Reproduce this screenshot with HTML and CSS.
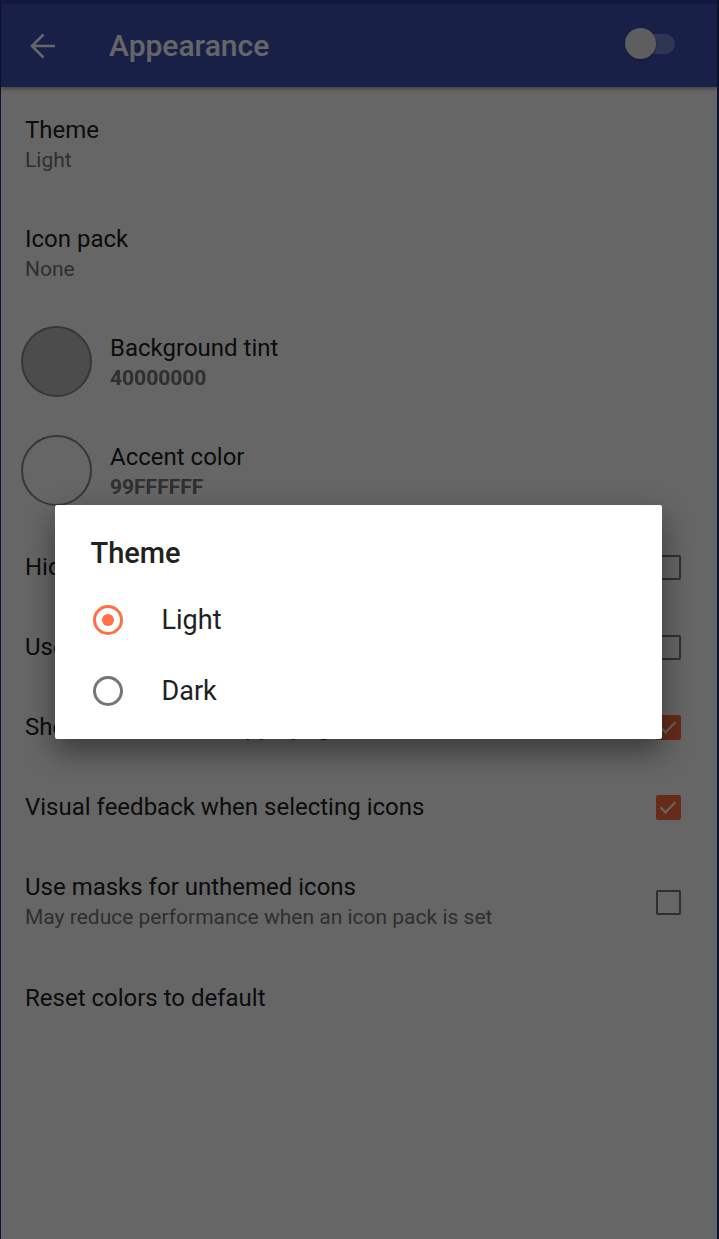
FILE: index.html
```html
<!DOCTYPE html>
<html>
<head>
<meta charset="utf-8">
<link rel="stylesheet" href="styles.css">
</head>
<body>
<div class="screen">
  <div class="statusbar"></div>
  <header class="toolbar">
    <svg class="back" width="28" height="28" viewBox="0 0 28 28"><path d="M26 14H3M14.5 2.5L3 14l11.5 11.5" fill="none" stroke="#fff" stroke-width="2.6"/></svg>
    <h1 class="title">Appearance</h1>
    <div class="switch"><span class="track"></span><span class="thumb"></span></div>
  </header>
  <main class="list">
    <div class="row two"><div class="text"><div class="t">Theme</div><div class="s">Light</div></div></div>
    <div class="row two"><div class="text"><div class="t">Icon pack</div><div class="s">None</div></div></div>
    <div class="row two color"><span class="swatch dark"></span><div class="text"><div class="t">Background tint</div><div class="s bold">40000000</div></div></div>
    <div class="row two color"><span class="swatch light"></span><div class="text"><div class="t">Accent color</div><div class="s bold">99FFFFFF</div></div></div>
    <div class="row one"><div class="text"><div class="t">Hide the status bar</div></div><span class="cb"></span></div>
    <div class="row one"><div class="text"><div class="t">Use rounded icons</div></div><span class="cb"></span></div>
    <div class="row one"><div class="text"><div class="t">Show labels on the apps page</div></div><span class="cb on"></span></div>
    <div class="row one"><div class="text"><div class="t">Visual feedback when selecting icons</div></div><span class="cb on"></span></div>
    <div class="row two masks"><div class="text"><div class="t">Use masks for unthemed icons</div><div class="s">May reduce performance when an icon pack is set</div></div><span class="cb"></span></div>
    <div class="row one"><div class="text"><div class="t">Reset colors to default</div></div></div>
  </main>
  <div class="scrim">
    <div class="dialog">
      <div class="dtitle">Theme</div>
      <div class="opt"><span class="radio on"></span><span>Light</span></div>
      <div class="opt"><span class="radio"></span><span>Dark</span></div>
    </div>
  </div>
</div>
</body>
</html>
```
FILE: styles.css
```css
html, body { margin: 0; padding: 0; }
body {
  background: #0e1230;
  font-family: Roboto, "Noto Sans", sans-serif;
  width: 719px;
  height: 1239px;
  overflow: hidden;
}
.screen {
  position: relative;
  margin: 0 2px 0 1px;
  height: 1239px;
  background: #fff;
  display: flex;
  flex-direction: column;
}
.statusbar { height: 4px; background: #303F9F; flex: none; }
.toolbar {
  height: 83px;
  background: #3F51B5;
  display: flex;
  align-items: center;
  flex: none;
  box-shadow: 0 2px 4px rgba(0,0,0,0.35);
  position: relative;
  z-index: 1;
}
.back { margin-left: 28px; margin-top: 0; flex: none; }
.title {
  margin: 0 0 0 52px;
  font-size: 30px;
  font-weight: 500;
  color: #fff;
  flex: 1;
  position: relative;
  top: 0;
}
.switch { position: relative; width: 52px; height: 32px; margin-right: 41px; margin-top: -4px; flex: none; }
.track { position: absolute; left: 15px; top: 6px; width: 36px; height: 20px; border-radius: 10px; background: rgba(255,255,255,0.3); }
.thumb { position: absolute; left: 1px; top: 0; width: 31px; height: 31px; border-radius: 50%; background: #ececec; box-shadow: 0 1px 2px rgba(0,0,0,0.4); }

.list { padding-top: 4px; }
.row { display: flex; align-items: center; padding: 0 36px 0 24px; }
.row.two { height: 109px; }
.row.one { height: 80px; }
.row.masks { height: 111px; }
.text { flex: 1; }
.t { font-size: 24px; color: #212121; line-height: 30px; }
.s { font-size: 21px; color: #757575; line-height: 31px; }
.s.bold { font-weight: 700; }
.color { padding-left: 20px; }
.color .text { margin-left: 18px; }
.swatch { width: 67px; height: 67px; border-radius: 50%; border: 2px solid #888; flex: none; position: relative; top: -2px; }
.swatch.dark { background: #bfbfbf; }
.swatch.light { background: #fff; }
.cb {
  width: 21px; height: 21px; border: 2.5px solid #757575; border-radius: 2px; flex: none; position: relative;
}
.cb.on { background: #FF6E40; border-color: #FF6E40; }
.cb.on::after {
  content: ""; position: absolute; left: 6px; top: 1px; width: 6px; height: 13px;
  border: solid #fff; border-width: 0 2.5px 2.5px 0; transform: rotate(45deg);
}

.scrim {
  position: absolute; inset: 0; background: rgba(0,0,0,0.6); z-index: 5;
  display: flex; align-items: center; justify-content: center;
}
.dialog {
  width: 607px; height: 234px; background: #fff; border-radius: 2px;
  box-shadow: 0 12px 30px rgba(0,0,0,0.45);
  box-sizing: border-box; padding-top: 30px; margin-top: 4px; margin-left: -2px;
}
.dtitle { font-size: 29px; font-weight: 500; color: #212121; padding-left: 36px; line-height: 36px; margin-bottom: 14px; }
.opt { display: flex; align-items: center; height: 71px; padding-left: 38px; font-size: 27px; color: #212121; }
.radio { width: 30px; height: 30px; border: 3px solid #757575; border-radius: 50%; box-sizing: border-box; margin-right: 39px; position: relative; flex: none; }
.radio.on { border-color: #FF7043; }
.radio.on::after { content: ""; position: absolute; left: 6px; top: 6px; width: 12px; height: 12px; border-radius: 50%; background: #FF7043; }
```
